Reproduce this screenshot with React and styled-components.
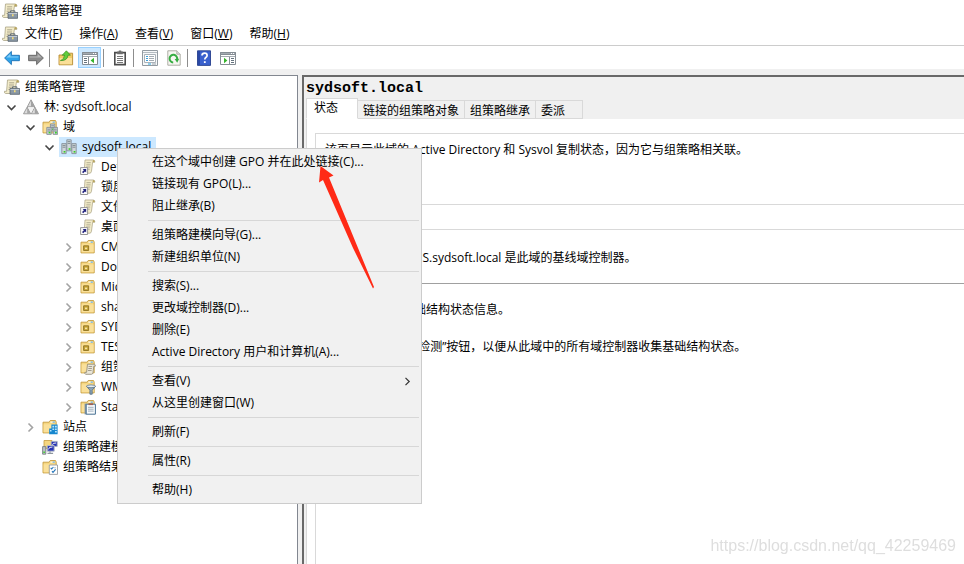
import { useState } from "react";
import styled, { createGlobalStyle, css } from "styled-components";

const GlobalStyle = createGlobalStyle`
  * {
    box-sizing: border-box;
  }
  body {
    margin: 0;
    background: #f0f0f0;
    color: #000;
    font: 12px/16px "Open Sans", "Noto Sans CJK SC", sans-serif;
  }
  button {
    padding: 0;
    border: 0;
    background: none;
    color: inherit;
    font: inherit;
    white-space: nowrap;
  }
`;

/* ---------- layout ---------- */

const Window = styled.div`
  display: flex;
  flex-direction: column;
  height: 100vh;
  overflow: hidden;
`;

const TitleBar = styled.header`
  display: flex;
  align-items: center;
  gap: 4px;
  height: 22px;
  padding-left: 2px;
  background: #fff;
`;

const Title = styled.h1`
  margin: 0;
  font-size: 12px;
  font-weight: 400;
`;

const MenuBar = styled.nav`
  display: flex;
  align-items: center;
  height: 24px;
  padding-left: 2px;
  background: #fff;
  border-bottom: 1px solid #ccc;
`;

const MenuButton = styled.button`
  height: 20px;
  padding: 0 10px 0 7px;

  &:hover {
    background: #e5f3ff;
  }
`;

const ToolBar = styled.div`
  display: flex;
  align-items: center;
  gap: 1px;
  height: 23px;
  margin-bottom: 6px;
  background: #fff;
`;

const ToolButton = styled.button`
  display: flex;
  align-items: center;
  justify-content: center;
  width: 23px;
  height: 21px;
  ${(props) =>
    props.$active &&
    css`
      background: #cce8ff;
      border: 1px solid #99d1ff;
    `}
`;

const Divider = styled.span`
  width: 1px;
  height: 18px;
  margin: 0 3px 0 1px;
  background: #8d8d8d;
`;

const Body = styled.div`
  flex: 1;
  display: flex;
  gap: 4px;
  min-height: 0;
`;

/* ---------- tree ---------- */

const TreePane = styled.aside`
  flex: 0 0 298px;
  overflow: hidden;
  padding-top: 1px;
  background: #fff;
  border-top: 1px solid #828790;
  border-right: 1px solid #828790;
`;

const TreeList = styled.ul`
  margin: 0;
  padding: 0;
  list-style: none;
`;

const TreeRow = styled.div`
  display: flex;
  align-items: center;
  height: 20px;
  padding-left: ${(props) => (props.$depth ? props.$depth * 19 - 15 : 2)}px;
`;

const Toggle = styled.button`
  display: flex;
  align-items: center;
  width: 17px;
  height: 20px;
  padding-left: 2px;
  visibility: ${(props) => (props.$hidden ? "hidden" : "visible")};
`;

const NodeButton = styled.button`
  display: flex;
  align-items: center;
  gap: 5px;
  height: 20px;
  padding: 0 5px 0 2px;
  background: ${(props) => (props.$selected ? "#cce8ff" : "none")};
`;

/* ---------- details ---------- */

const Details = styled.main`
  flex: 1;
  display: flex;
  flex-direction: column;
  min-width: 0;
  padding: 3px 0 0 2px;
  border-top: 2px solid #696969;
  border-left: 2px solid #696969;
`;

const DomainName = styled.h2`
  margin: 0;
  font: bold 15px/18px "Liberation Mono", monospace;
`;

const Tabs = styled.div`
  display: flex;
  align-items: flex-end;
`;

const Tab = styled.button`
  height: 19px;
  padding: 2px 5px 0;
  border: 1px solid #d9d9d9;
  border-left: 0;

  &:last-child {
    padding-right: 17px;
  }

  ${(props) =>
    props.$active &&
    css`
      height: 21px;
      padding: 0 19px 2px 7px;
      background: #fff;
      border-left: 1px solid #d9d9d9;
      border-bottom-color: #fff;
    `}
`;

const TabPage = styled.section`
  flex: 1;
  display: flex;
  padding: 14px 0 0 8px;
  background: #fff;
  border-left: 1px solid #d9d9d9;
`;

const StatusBox = styled.div`
  flex: 1;
  min-width: 0;
  border-top: 1px solid #d9d9d9;
  border-left: 1px solid #d9d9d9;
`;

const Section = styled.div`
  height: ${(props) => props.$height}px;
  padding: ${(props) => props.$padding || "0"};
  border-bottom: 1px solid ${(props) => (props.$strong ? "#a0a0a0" : "#d9d9d9")};
`;

const Text = styled.p`
  margin: 0;
  white-space: nowrap;
`;

const Notes = styled.div`
  display: flex;
  flex-direction: column;
  gap: 21px;
  padding: 18px 0 0 14px;
`;

/* ---------- context menu ---------- */

const ContextMenu = styled.div`
  position: fixed;
  top: 148px;
  left: 117px;
  width: 305px;
  padding: 2px;
  background: #f1f1f1;
  border: 1px solid #ccc;
`;

const MenuItem = styled.button`
  display: flex;
  align-items: center;
  justify-content: space-between;
  width: 100%;
  height: 22px;
  padding: 0 7px 0 32px;

  &:hover {
    background: #fff;
  }
`;

const Separator = styled.hr`
  height: 1px;
  margin: 3px 0 3px 28px;
  border: 0;
  background: #d7d7d7;
`;

const Pointer = styled.svg`
  position: fixed;
  top: 165px;
  left: 318px;
  pointer-events: none;
`;

const Watermark = styled.span`
  position: fixed;
  right: 8px;
  bottom: 8px;
  color: #dedede;
  font: 16px/20px "Liberation Sans", sans-serif;
`;

/* ---------- icons ---------- */

const Icon = ({ children }) => (
  <svg width="16" height="16" viewBox="0 0 16 16" aria-hidden="true">
    {children}
  </svg>
);

const Scroll = () => (
  <>
    <path d="M3.5 1h9.5q2 0 2 2.2h-2.6L11 12.5q-.3 2-2 2H1.6q-1.4-.2-1.2-2.2h2.2z" fill="#f3ecca" stroke="#aaa387" strokeWidth=".8" />
    <path d="M12.4 3.4V2q.3-1 1.3-1 1.2.3 1.2 2.3z" fill="#b8a45c" />
    <path d="M5.2 3.8h5M5 6h5M4.7 8.2h4.8M4.4 10.4h4.6" stroke="#98937c" strokeWidth=".8" />
  </>
);

const Folder = () => (
  <>
    <path d="M1 3.2h6.2l1-1.7h5.3l.7 1.6v10.8H1z" fill="#f5d680" stroke="#c59c3f" strokeWidth=".9" />
    <path d="M8.4 2.6h4.8v1H8.4z" fill="#fff" />
    <path d="M10.6 2.6h2.3v1h-2.3z" fill="#4ba0dd" />
    <path d="M1.6 5.3h12v8H1.6z" fill="#fae09a" />
  </>
);

const Server = ({ x, y, h = 9 }) => (
  <>
    <path d={`M${x} ${y}h4.4v${h}h-4.4z`} fill="#cfd6da" stroke="#7c878e" strokeWidth=".8" />
    <path d={`M${x + 0.8} ${y + 1.8}h2.8M${x + 0.8} ${y + 3.6}h2.8`} stroke="#6c787f" strokeWidth=".8" />
    <path d={`M${x + 1.8} ${y + h - 2.6}h1.8v1.6h-1.8z`} fill="#39cf27" />
  </>
);

const ConsoleIcon = () => (
  <Icon>
    <Scroll />
    <path d="M8.6 9.5V7.8h4.2v1.7" fill="none" stroke="#5e6871" />
    <path d="M6 9.5h9.6v5.8H6z" fill="#8b99a6" stroke="#56616c" strokeWidth=".8" />
    <path d="M6.4 10.4h8.8" stroke="#c7d0d8" />
    <path d="M10 11.2h1.6v2H10z" fill="#f5dc79" />
  </Icon>
);

const ForestIcon = () => (
  <Icon>
    <path d="M8 .8l3.7 7H4.3z" fill="#dcdcdc" stroke="#8a8a8a" strokeWidth=".8" />
    <path d="M8 .8v7h3.7z" fill="#a2a2a2" />
    <path d="M4.2 8l3.6 6.8H.5z" fill="#dcdcdc" stroke="#8a8a8a" strokeWidth=".8" />
    <path d="M4.2 8v6.8h3.6z" fill="#a8a8a8" />
    <path d="M11.8 8l3.7 6.8H8.2z" fill="#dcdcdc" stroke="#8a8a8a" strokeWidth=".8" />
    <path d="M11.8 8v6.8h3.7z" fill="#a2a2a2" />
    <path d="M4.8 8.3h6.4L8 14z" fill="#f2f2f2" />
  </Icon>
);

const DomainsIcon = () => (
  <Icon>
    <Folder />
    <Server x={8.4} y={5} h={7} />
    <Server x={4.8} y={8.4} h={7} />
    <Server x={11.2} y={8.4} h={7} />
  </Icon>
);

const DomainIcon = () => (
  <Icon>
    <Server x={5.8} y={0.8} h={11} />
    <Server x={0.8} y={4.6} h={10} />
    <Server x={10.8} y={4.6} h={10} />
  </Icon>
);

const LinkIcon = () => (
  <Icon>
    <g transform="translate(2 0) scale(.86 .98)">
      <Scroll />
    </g>
    <path d="M.6 8.6h7v6.9h-7z" fill="#fff" stroke="#8a8a8a" strokeWidth=".9" />
    <path d="M2.6 10h3.6v3.6l-1.2-1.2-1.8 1.9-1.2-1.2 1.9-1.8z" fill="#27277f" />
  </Icon>
);

const UnitIcon = () => (
  <Icon>
    <Folder />
    <path d="M3.6 6.8h5v4.7h-5z" fill="#c6a131" stroke="#8d7220" strokeWidth=".9" />
    <path d="M5 8.6h2.2v1.6H5z" fill="#f4e3a2" />
  </Icon>
);

const ObjectsIcon = () => (
  <Icon>
    <Folder />
    <path d="M7.5 5.2h6.8q1.2.2 1 2h-1.5l-.8 6.3q-.3 1.8-1.6 1.8H5.6q-1-.4-.7-2h1.7z" fill="#eae6d8" stroke="#8a8575" strokeWidth=".8" />
    <path d="M8.5 7.5h3.6M8.3 9.5h3.6M8 11.5h3.6" stroke="#918c7c" strokeWidth=".8" />
  </Icon>
);

const FilterIcon = () => (
  <Icon>
    <Folder />
    <path d="M6.5 7.2h9l-3.3 4v4H9.9v-4z" fill="#8fa6b9" stroke="#526a80" strokeWidth=".8" />
    <ellipse cx="11" cy="7.3" rx="4.4" ry="1.4" fill="#e4edf3" stroke="#526a80" strokeWidth=".7" />
  </Icon>
);

const StarterIcon = () => (
  <Icon>
    <Folder />
    <path d="M4.6 4.6h2v10.8h-2z" fill="#8797a3" />
    <path d="M6.2 5.2h9.2v10H6.2z" fill="#f8fbfd" stroke="#477093" />
    <path d="M8.5 4.3h4.5v1.8H8.5z" fill="#a06154" />
    <path d="M8 8.3h5.6M8 10.2h5.6M8 12.1h5.6" stroke="#95a7b5" strokeWidth=".9" />
  </Icon>
);

const SitesIcon = () => (
  <Icon>
    <Folder />
    <path d="M9.4 5.4h6.2v9.8H7.2V9.6h2.2z" fill="#1687cf" />
    <path d="M10.4 6.8h1.8v1.6h-1.8zM13 6.8h1.8v1.6H13zM10.4 9.4h1.8V11h-1.8zM13 9.4h1.8V11H13zM8 11h1.5v1.4H8zM13 12h1.8v1.6H13z" fill="#b5e2fa" />
  </Icon>
);

const ModelingIcon = () => (
  <Icon>
    <path d="M2 1.5h8v8H2z" fill="#f5d680" stroke="#c59c3f" strokeWidth=".8" />
    <path d="M9.2 2.4h6v5h-6z" fill="#2431b2" stroke="#aab3bd" strokeWidth=".9" />
    <path d="M5.2 6.6h7v5.6h-7z" fill="#2431b2" stroke="#b9c0c8" />
    <path d="M6.5 10.4q0-2.6 4-2.4M10.5 5.8q0-2 3.5-1.8" fill="none" stroke="#fff" strokeWidth=".9" />
    <path d="M8 12.2v1.6M5.5 14.4h5.6" stroke="#8e979f" strokeWidth="1.1" />
    <path d="M.6 7.6h3.2v7.6H.6z" fill="#bcc2c6" stroke="#6c7378" strokeWidth=".8" />
    <path d="M1.3 12.4H3V14H1.3z" fill="#4ad13e" />
  </Icon>
);

const ResultsIcon = () => (
  <Icon>
    <Folder />
    <path d="M7.3 6h8.2v9.4H7.3z" fill="#fff" stroke="#8c9196" strokeWidth=".8" />
    <path d="M8.7 8.8l1 1.2 1.7-2M10 12.2l1 1.2 2.6-3" fill="none" stroke="#2273b9" strokeWidth="1.1" />
    <path d="M12 8.8h2" stroke="#9fb0bd" strokeWidth=".8" />
  </Icon>
);

const BackIcon = () => (
  <Icon>
    <path d="M.6 8L7.4 1.4v3.9h8v5.4h-8v3.9z" fill="#2ea3ea" stroke="#1b6fb4" strokeWidth=".9" />
    <path d="M2.4 7.6l4-3.9v2.7h8v1.2z" fill="#84cdf8" />
  </Icon>
);

const ForwardIcon = () => (
  <Icon>
    <path d="M15.4 8L8.6 1.4v3.9h-8v5.4h8v3.9z" fill="#8c8c8c" stroke="#626262" strokeWidth=".9" />
    <path d="M13.6 7.6l-4-3.9v2.7h-8v1.2z" fill="#b5b5b5" />
  </Icon>
);

const UpIcon = () => (
  <Icon>
    <path d="M1 5h6l1-1.8h6.6v11.6H1z" fill="#f2cb68" stroke="#b78d35" strokeWidth=".9" />
    <path d="M1.6 8h12.4v6.2H1.6z" fill="#fadf98" />
    <path d="M2.4 10.6Q6 9.8 6.6 5.2H4.2L8.4.8l4 4.4H10Q9.4 11 2.4 10.6z" fill="#5fcc3d" stroke="#338f20" strokeWidth=".7" />
  </Icon>
);

const Panes = ({ children }) => (
  <>
    <path d="M.5 2.5h15v12H.5z" fill="#fff" stroke="#858d94" />
    <path d="M.5 2.5h15v2H.5z" fill="#a4abb1" stroke="#858d94" />
    <path d="M11 3.5h1M13 3.5h1" stroke="#fff" />
    <path d="M1 6.5h14" stroke="#a4abb1" />
    {children}
  </>
);

const TreePaneIcon = () => (
  <Icon>
    <Panes>
      <path d="M6.5 7v7" stroke="#858d94" />
      <path d="M2 8.5h3M2 10.5h3M2 12.5h3" stroke="#65737e" />
      <path d="M12 7.8v5.4L8.6 10.5z" fill="#35b52c" />
    </Panes>
  </Icon>
);

const ActionPaneIcon = () => (
  <Icon>
    <Panes>
      <path d="M9.5 7v7" stroke="#858d94" />
      <path d="M11 8.5h3M11 10.5h3M11 12.5h3" stroke="#65737e" />
      <path d="M4 7.8v5.4l3.4-2.7z" fill="#35b52c" />
    </Panes>
  </Icon>
);

const ClipboardIcon = () => (
  <Icon>
    <path d="M2.8 2.6h10.4v12H2.8z" fill="#fff" stroke="#4c4c4c" strokeWidth="1.6" />
    <path d="M5.2 1.6h1.6V.6h2.4v1h1.6v2.6H5.2z" fill="#6b6b6b" />
    <path d="M5 6.5h6M5 8.5h6M5 10.5h6M5 12.5h6" stroke="#777" />
  </Icon>
);

const PropertiesIcon = () => (
  <Icon>
    <path d="M.5.5h15v15H.5z" fill="#f6f8f9" stroke="#929aa1" />
    <path d="M1 2.5h14" stroke="#b4bbc1" />
    <path d="M2.5 4.5h11v8h-11z" fill="#fff" stroke="#aab2b9" />
    <path d="M4 6.5h2M4 8.5h2M4 10.5h2" stroke="#3c9fda" />
    <path d="M7 6.5h5M7 8.5h5M7 10.5h5" stroke="#a3abb2" />
    <path d="M6 14h3" stroke="#24a4e0" />
    <path d="M10 14h4" stroke="#9aa4ac" />
  </Icon>
);

const RefreshIcon = () => (
  <Icon>
    <path d="M1.8.8h9l3.4 3.4v11H1.8z" fill="#f7f7f2" stroke="#a5a59d" strokeWidth=".9" />
    <path d="M10.8.8v3.4h3.4" fill="#ddd" stroke="#a5a59d" strokeWidth=".8" />
    <path d="M7.2 12.4a3.8 3.8 0 1 1 3.9-3" fill="none" stroke="#36ad42" strokeWidth="2" />
    <path d="M13.2 8.8l-4.6.3 2.6 3.6z" fill="#36ad42" />
  </Icon>
);

const HelpIcon = () => (
  <Icon>
    <path d="M1.5.8h13v14.6h-13z" fill="#3a61ce" stroke="#263f8d" strokeWidth=".9" />
    <path d="M2 1h2v14H2z" fill="#2a48a6" />
    <path d="M6 5.6q0-2.4 2.6-2.4 2.5 0 2.5 2.2 0 1.2-1.3 2.1-1 .7-1 2.1" fill="none" stroke="#fff" strokeWidth="1.7" />
    <path d="M7.9 11.2h1.8v1.8H7.9z" fill="#fff" />
  </Icon>
);

const Chevron = ({ open }) => (
  <svg width="11" height="11" viewBox="0 0 11 11" aria-hidden="true">
    {open ? (
      <path d="M1.5 3.5l4 4 4-4" fill="none" stroke="#454545" strokeWidth="1.6" />
    ) : (
      <path d="M3.5 1.5l4 4-4 4" fill="none" stroke="#a3a3a3" strokeWidth="1.6" />
    )}
  </svg>
);

/* ---------- data ---------- */

const menus = [
  ["文件", "F"],
  ["操作", "A"],
  ["查看", "V"],
  ["窗口", "W"],
  ["帮助", "H"],
];

const tools = [
  { label: "后退", icon: BackIcon },
  { label: "前进", icon: ForwardIcon },
  null,
  { label: "向上一级", icon: UpIcon },
  { label: "显示/隐藏控制台树", icon: TreePaneIcon, active: true },
  null,
  { label: "粘贴", icon: ClipboardIcon },
  null,
  { label: "属性", icon: PropertiesIcon },
  { label: "刷新", icon: RefreshIcon },
  null,
  { label: "帮助", icon: HelpIcon },
  { label: "显示/隐藏操作窗格", icon: ActionPaneIcon },
];

const tree = [
  {
    label: "林: sydsoft.local",
    icon: ForestIcon,
    open: true,
    children: [
      {
        label: "域",
        icon: DomainsIcon,
        open: true,
        children: [
          {
            label: "sydsoft.local",
            icon: DomainIcon,
            open: true,
            selected: true,
            children: [
              { label: "Default Domain Policy", icon: LinkIcon },
              { label: "锁屏", icon: LinkIcon },
              { label: "文件", icon: LinkIcon },
              { label: "桌面", icon: LinkIcon },
              { label: "CM", icon: UnitIcon, children: [] },
              { label: "Domain Controllers", icon: UnitIcon, children: [] },
              { label: "Microsoft", icon: UnitIcon, children: [] },
              { label: "share", icon: UnitIcon, children: [] },
              { label: "SYD", icon: UnitIcon, children: [] },
              { label: "TEST", icon: UnitIcon, children: [] },
              { label: "组策略对象", icon: ObjectsIcon, children: [] },
              { label: "WMI 筛选器", icon: FilterIcon, children: [] },
              { label: "Starter GPO", icon: StarterIcon, children: [] },
            ],
          },
        ],
      },
      { label: "站点", icon: SitesIcon, children: [] },
      { label: "组策略建模", icon: ModelingIcon },
      { label: "组策略结果", icon: ResultsIcon },
    ],
  },
];

const tabs = ["状态", "链接的组策略对象", "组策略继承", "委派"];

const contextItems = [
  ["在这个域中创建 GPO 并在此处链接(C)...", "链接现有 GPO(L)...", "阻止继承(B)"],
  ["组策略建模向导(G)...", "新建组织单位(N)"],
  ["搜索(S)...", "更改域控制器(D)...", "删除(E)", "Active Directory 用户和计算机(A)..."],
  ["查看(V)", "从这里创建窗口(W)"],
  ["刷新(F)"],
  ["属性(R)"],
  ["帮助(H)"],
];

/* ---------- components ---------- */

const TreeNode = ({ node, depth }) => {
  const [open, setOpen] = useState(Boolean(node.open));
  const NodeIcon = node.icon;
  return (
    <li>
      <TreeRow $depth={depth}>
        <Toggle
          $hidden={!node.children}
          aria-label={node.label}
          aria-expanded={open}
          onClick={() => setOpen(!open)}
        >
          <Chevron open={open} />
        </Toggle>
        <NodeButton $selected={node.selected}>
          <NodeIcon />
          {node.label}
        </NodeButton>
      </TreeRow>
      {open && node.children && (
        <TreeList>
          {node.children.map((child) => (
            <TreeNode key={child.label} node={child} depth={depth + 1} />
          ))}
        </TreeList>
      )}
    </li>
  );
};

const ContextMenuGroup = ({ items, first }) => (
  <>
    {!first && <Separator />}
    {items.map((item) => (
      <MenuItem key={item} role="menuitem">
        {item}
        {item === "查看(V)" && (
          <svg width="9" height="9" viewBox="0 0 9 9" aria-hidden="true">
            <path d="M2.5 .8l3.7 3.7-3.7 3.7" fill="none" stroke="#333" strokeWidth="1.2" />
          </svg>
        )}
      </MenuItem>
    ))}
  </>
);

const App = () => {
  const [tab, setTab] = useState(tabs[0]);
  return (
    <Window>
      <GlobalStyle />
      <TitleBar>
        <ConsoleIcon />
        <Title>组策略管理</Title>
      </TitleBar>
      <MenuBar>
        <ConsoleIcon />
        {menus.map(([name, key]) => (
          <MenuButton key={key}>
            {name}(<u>{key}</u>)
          </MenuButton>
        ))}
      </MenuBar>
      <ToolBar>
        {tools.map((tool, i) =>
          tool ? (
            <ToolButton key={i} aria-label={tool.label} $active={tool.active}>
              <tool.icon />
            </ToolButton>
          ) : (
            <Divider key={i} />
          )
        )}
      </ToolBar>
      <Body>
        <TreePane>
          <TreeRow $depth={0}>
            <NodeButton>
              <ConsoleIcon />
              组策略管理
            </NodeButton>
          </TreeRow>
          <TreeList>
            {tree.map((node) => (
              <TreeNode key={node.label} node={node} depth={1} />
            ))}
          </TreeList>
        </TreePane>
        <Details>
          <DomainName>sydsoft.local</DomainName>
          <Tabs role="tablist">
            {tabs.map((name) => (
              <Tab
                key={name}
                role="tab"
                aria-selected={tab === name}
                $active={tab === name}
                onClick={() => setTab(name)}
              >
                {name}
              </Tab>
            ))}
          </Tabs>
          <TabPage>
            <StatusBox>
              <Section $height={71} $padding="8px 0 0 9px">
                <Text>该页显示此域的 Active Directory 和 Sysvol 复制状态，因为它与组策略相关联。</Text>
              </Section>
              <Section $height={25} />
              <Section $height={54} $padding="20px 0 0 14px" $strong>
                <Text>SYDSOFT-AD-DNS.sydsoft.local 是此域的基线域控制器。</Text>
              </Section>
              <Notes>
                <Text>此域中不存在基础结构状态信息。</Text>
                <Text>单击下面的“立即检测”按钮，以便从此域中的所有域控制器收集基础结构状态。</Text>
              </Notes>
            </StatusBox>
          </TabPage>
        </Details>
      </Body>
      <ContextMenu role="menu">
        {contextItems.map((items, i) => (
          <ContextMenuGroup key={i} items={items} first={i === 0} />
        ))}
      </ContextMenu>
      <Pointer width="58" height="125" viewBox="0 0 58 125" aria-hidden="true">
        <path d="M2.5 1L15.5 10.5 11 12.5 40 83 56 122 55 123.5 35 83 5 15 1 17.5z" fill="#ff2a16" />
      </Pointer>
      <Watermark>https://blog.csdn.net/qq_42259469</Watermark>
    </Window>
  );
};

export default App;
